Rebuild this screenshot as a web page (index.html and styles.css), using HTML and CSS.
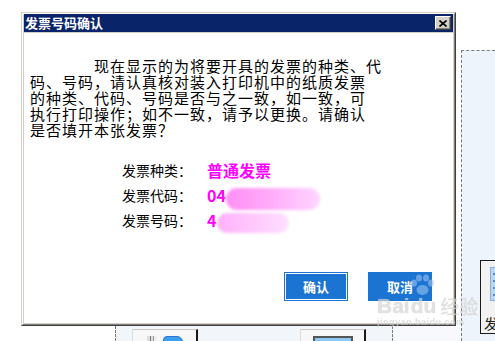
FILE: index.html
```html
<!DOCTYPE html>
<html lang="zh-CN">
<head>
<meta charset="utf-8">
<title>发票号码确认</title>
<link rel="stylesheet" href="styles.css">
</head>
<body>
<div class="desk">
  <div class="panel-right">
    <div class="side-tile">
      <div class="side-icon"><span></span><span></span><span></span><span></span></div>
      <div class="side-text">发</div>
    </div>
  </div>
  <div class="strip strip-a">
    <div class="tile">
      <span class="bars"></span><span class="blue-pill"></span>
    </div>
    <div class="tile">
      <span class="blue-box"></span>
    </div>
  </div>
  <div class="strip strip-b"></div>
</div>

<div class="dialog">
  <div class="frame">
    <div class="titlebar">
      <span class="title">发票号码确认</span>
      <span class="close"><svg width="8" height="7" viewBox="0 0 8 7"><path d="M0.5 0.5 L7.5 6.5 M7.5 0.5 L0.5 6.5" stroke="#000" stroke-width="1.6"/></svg></span>
    </div>
    <div class="content">
      <p class="msg">现在显示的为将要开具的发票的种类、代<br><span class="cont">码、号码，请认真核对装入打印机中的纸质发票</span><br><span class="cont">的种类、代码、号码是否与之一致，如一致，可</span><br><span class="cont">执行打印操作；如不一致，请予以更换。请确认</span><br><span class="cont">是否填开本张发票？</span></p>
      <div class="fields">
        <span class="label">发票种类：</span><span class="value">普通发票</span>
        <span class="label">发票代码：</span><span class="value">04<span class="smudge smudge-a"></span></span>
        <span class="label">发票号码：</span><span class="value">4<span class="smudge smudge-b"></span></span>
      </div>
      <div class="actions">
        <button class="btn btn-default">确认</button>
        <button class="btn">取消</button>
      </div>
    </div>
  </div>
</div>

<div class="watermark">
  <div class="wm-row">
    <span class="wm-big">Bai</span>
    <span class="wm-du">du<svg class="paw" width="26" height="22" viewBox="0 0 26 22"><ellipse cx="5" cy="9" rx="3" ry="3.5" fill="#9cc3f0"/><ellipse cx="10" cy="4" rx="3" ry="3.5" fill="#9cc3f0"/><ellipse cx="17" cy="4" rx="3" ry="3.5" fill="#9cc3f0"/><ellipse cx="22" cy="9" rx="3" ry="3.5" fill="#9cc3f0"/><ellipse cx="13.5" cy="16" rx="6" ry="5" fill="#9cc3f0"/></svg></span>
    <span class="wm-cn">经验</span>
  </div>
  <div class="wm-url">jingyan.baidu.com</div>
</div>
</body>
</html>
```
FILE: styles.css
```css
* { box-sizing: border-box; }
html, body { margin: 0; padding: 0; }
body {
  width: 495px;
  height: 341px;
  overflow: hidden;
  position: relative;
  background: #fff;
  font-family: "Noto Sans CJK SC", sans-serif;
}

/* background application */
.desk {
  display: grid;
  grid-template-columns: 115px 277px 69px 34px;
  grid-template-rows: 50px 276px 15px;
  height: 341px;
}
.panel-right {
  grid-column: 4;
  grid-row: 2 / 4;
  border-left: 1px dashed #7a7a7a;
  border-top: 1px dashed #7a7a7a;
  background: #eef4fb;
  padding: 209px 0 0 18px;
  overflow: hidden;
}
.side-tile {
  width: 40px;
  height: 74px;
  border: 1px solid #1a1a1a;
  background: #f2f2f2;
  padding: 6px 0 0 9px;
  display: flex;
  flex-direction: column;
}
.side-icon {
  width: 20px;
  height: 34px;
  background: #b9d6f2;
  border: 1px solid #8fb0d0;
  display: flex;
  flex-direction: column;
  justify-content: space-around;
  padding: 2px;
}
.side-icon span { height: 2px; background: #5f87b5; }
.side-text {
  font-size: 14px;
  line-height: 16px;
  margin: 14px 0 0 -6px;
  color: #222;
}
.strip {
  grid-row: 3;
  border-left: 1px dashed #7a7a7a;
  background: #f2f6fb;
  overflow: hidden;
  display: flex;
}
.strip-a { grid-column: 2; padding: 3px 0 0 16px; gap: 102px; }
.strip-b { grid-column: 3; background: #f7f9fc; }
.tile {
  width: 66px;
  height: 20px;
  border-top: 1px solid #c8c8c8;
  border-left: 1px solid #dcdcdc;
  border-right: 2px solid #1a1a1a;
  background: #f7f7f7;
  display: flex;
  justify-content: center;
  align-items: flex-start;
  padding-top: 6px;
  gap: 6px;
}
.bars {
  width: 10px;
  height: 10px;
  background: linear-gradient(90deg, #ddd 0 3px, #777 3px 4px, #ddd 4px 6px, #999 6px 7px, #eee 7px);
}
.blue-pill {
  width: 20px;
  height: 10px;
  border-radius: 4px 6px 0 0;
  background: #3d9df0;
  border: 1px solid #2a78c8;
}
.blue-box {
  width: 40px;
  height: 10px;
  background: #8dc8f5;
  border: 2px solid #555;
  border-bottom: none;
}

/* dialog window */
.dialog {
  position: absolute;
  left: 21px;
  top: 12px;
  width: 435px;
  height: 314px;
  border: 1px solid;
  border-color: #d4d0c8 #404040 #404040 #d4d0c8;
  display: flex;
}
.frame {
  flex: 1;
  border: 1px solid;
  border-color: #fff #808080 #808080 #fff;
  background: #d4d0c8;
  padding: 0 1px 1px 1px;
  display: flex;
  flex-direction: column;
}
.titlebar {
  height: 18px;
  background: #0a246a;
  display: flex;
  align-items: center;
  justify-content: space-between;
  padding: 0 2px 0 1px;
}
.title {
  color: #fff;
  font-weight: bold;
  font-size: 13px;
  line-height: 18px;
}
.close {
  width: 16px;
  height: 14px;
  background: #d4d0c8;
  border: 1px solid;
  border-color: #fff #404040 #404040 #fff;
  box-shadow: inset -1px -1px 0 #808080;
  display: flex;
  align-items: center;
  justify-content: center;
}
.close svg { display: block; }
.content {
  flex: 1;
  margin-top: 1px;
  background: #fff;
  padding: 25px 21px 22px 38px;
  display: flex;
  flex-direction: column;
}
.msg {
  margin: 0;
  font-size: 15px;
  letter-spacing: 1px;
  line-height: 16px;
  color: #000;
  text-indent: 32px;
  white-space: nowrap;
}
.msg .cont { margin-left: -32px; }
.fields {
  margin: 20px 0 0 60px;
  display: grid;
  grid-template-columns: 85px auto;
  grid-auto-rows: 25px;
  align-items: center;
}
.label { font-size: 14px; color: #000; line-height: 25px; }
.value {
  font-size: 16px;
  font-weight: bold;
  color: #ff00ff;
  display: flex;
  align-items: center;
  line-height: 25px;
}
.smudge {
  display: inline-block;
  border-radius: 11px;
  filter: blur(1.5px);
}
.smudge-a {
  width: 94px;
  height: 22px;
  margin-top: 6px;
  background: linear-gradient(90deg, #ff8ff3, #ffaaf9 45%, #ffc6fd 80%, #ffd6ff);
}
.smudge-b {
  width: 72px;
  height: 20px;
  margin: 5px 0 0 1px;
  background: linear-gradient(90deg, #ffb0f9, #ffc8fd 50%, #ffe0ff);
}
.actions {
  margin-top: auto;
  display: flex;
  justify-content: flex-end;
  gap: 20px;
}
.btn {
  width: 64px;
  height: 29px;
  padding: 0;
  background: #1b74d2;
  color: #fff;
  font-family: "Noto Sans CJK SC", sans-serif;
  font-weight: bold;
  font-size: 13px;
  border: 1px solid #1b74d2;
  display: flex;
  align-items: center;
  justify-content: center;
}
.btn-default { box-shadow: inset 0 0 0 1px #fff; }

/* watermark overlay */
.watermark {
  position: absolute;
  left: 377px;
  top: 281px;
  display: flex;
  flex-direction: column;
  opacity: 0.7;
}
.wm-row { display: flex; align-items: flex-end; height: 36px; }
.wm-big, .wm-du {
  font-family: "Liberation Sans", sans-serif;
  font-weight: bold;
  font-size: 21px;
  line-height: 22px;
  color: #d6d6d6;
  text-shadow: 0 0 1px #bdbdbd;
}
.wm-du { position: relative; margin-left: 1px; }
.paw { position: absolute; left: -2px; top: -21px; opacity: 0.85; }
.wm-cn {
  font-size: 19px;
  line-height: 22px;
  margin-left: 4px;
  color: #d6d6d6;
  text-shadow: 0 0 1px #bdbdbd;
}
.wm-url {
  font-family: "Liberation Sans", sans-serif;
  font-size: 9px;
  font-weight: bold;
  line-height: 9px;
  color: #d0d0d0;
  margin-top: 1px;
  letter-spacing: 0.5px;
}
```
